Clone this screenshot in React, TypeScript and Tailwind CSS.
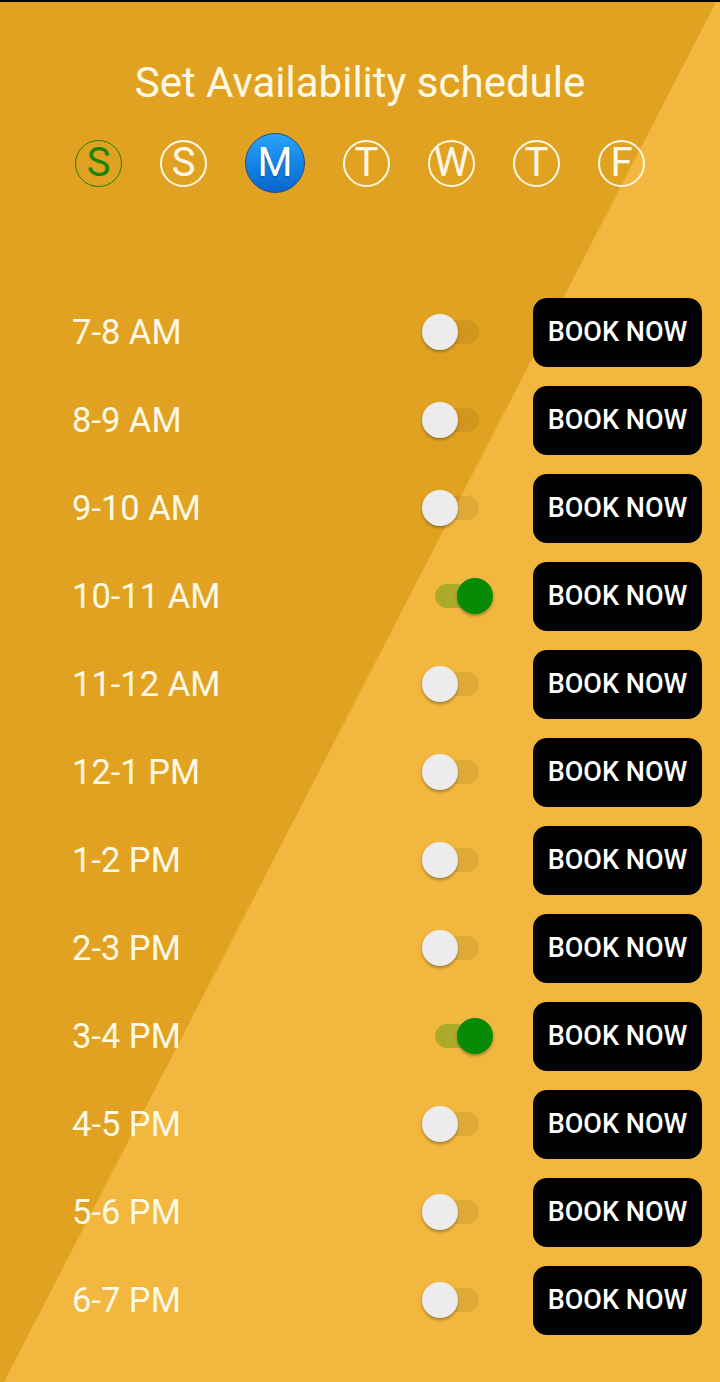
import React from "react";

const times = [
  "7-8 AM",
  "8-9 AM",
  "9-10 AM",
  "10-11 AM",
  "11-12 AM",
  "12-1 PM",
  "1-2 PM",
  "2-3 PM",
  "3-4 PM",
  "4-5 PM",
  "5-6 PM",
  "6-7 PM",
];
const onSet = new Set([3, 8]);

function Toggle({ on }: { on: boolean }) {
  return (
    <div className="relative w-[71px] h-[36px] mr-[40px] shrink-0">
      <div
        className={
          "absolute left-[13px] top-[6px] w-[44px] h-[24px] rounded-full " +
          (on ? "bg-[#5a9a10]/45" : "bg-black/[0.07]")
        }
      />
      <div
        className={
          "absolute top-0 w-[36px] h-[36px] rounded-full shadow-[0_2px_3px_rgba(0,0,0,0.3)] " +
          (on ? "left-[35px] bg-[#078a06]" : "left-0 bg-[#ececec]")
        }
      />
    </div>
  );
}

function Day({ l, kind }: { l: string; kind: "green" | "white" | "blue" }) {
  if (kind === "blue") {
    return (
      <div className="w-[60px] h-[60px] rounded-full border border-[#1c4f86] bg-[linear-gradient(180deg,#2aa3f5_0%,#1482e6_55%,#0b64c9_100%)] flex items-center justify-center text-white text-[40px] leading-none [text-shadow:0_1px_2px_rgba(0,0,0,0.35)]">
        {l}
      </div>
    );
  }
  return (
    <div
      className={
        "w-[47px] h-[47px] rounded-full flex items-center justify-center text-[40px] leading-none " +
        (kind === "green"
          ? "border-[1.5px] border-[#1f8000] text-[#1a8400]"
          : "border-2 border-[#fff8e4] text-[#fff8e4]")
      }
    >
      {l}
    </div>
  );
}

export default function App() {
  return (
    <div
      className="relative w-[720px] h-[1382px] overflow-hidden bg-[#e2a221] border-t-2 border-black text-[#fff9e6]"
      style={{ fontFamily: "Roboto, 'Noto Sans', sans-serif" }}
    >
      <div className="absolute inset-0 bg-[#f1b73e] [clip-path:polygon(716px_0,100%_0,100%_100%,4px_100%)]" />
      <div className="relative">
        <h1 className="pt-[57px] text-center text-[42px] leading-[48px] font-normal">
          Set Availability schedule
        </h1>
        <div className="mt-[26px] flex items-center justify-center gap-[38px] h-[60px]">
          <Day l="S" kind="green" />
          <Day l="S" kind="white" />
          <Day l="M" kind="blue" />
          <Day l="T" kind="white" />
          <Day l="W" kind="white" />
          <Day l="T" kind="white" />
          <Day l="F" kind="white" />
        </div>
        <div className="mt-[95px] flex flex-col">
          {times.map((t, i) => (
            <div key={t} className="h-[88px] flex items-center pl-[72px] pr-[18px]">
              <div className="flex-1 text-[34.5px] leading-none">{t}</div>
              <Toggle on={onSet.has(i)} />
              <button className="w-[169px] h-[69px] rounded-[14px] bg-black text-white text-[27px] font-medium leading-none flex items-center justify-center">
                BOOK NOW
              </button>
            </div>
          ))}
        </div>
      </div>
    </div>
  );
}
